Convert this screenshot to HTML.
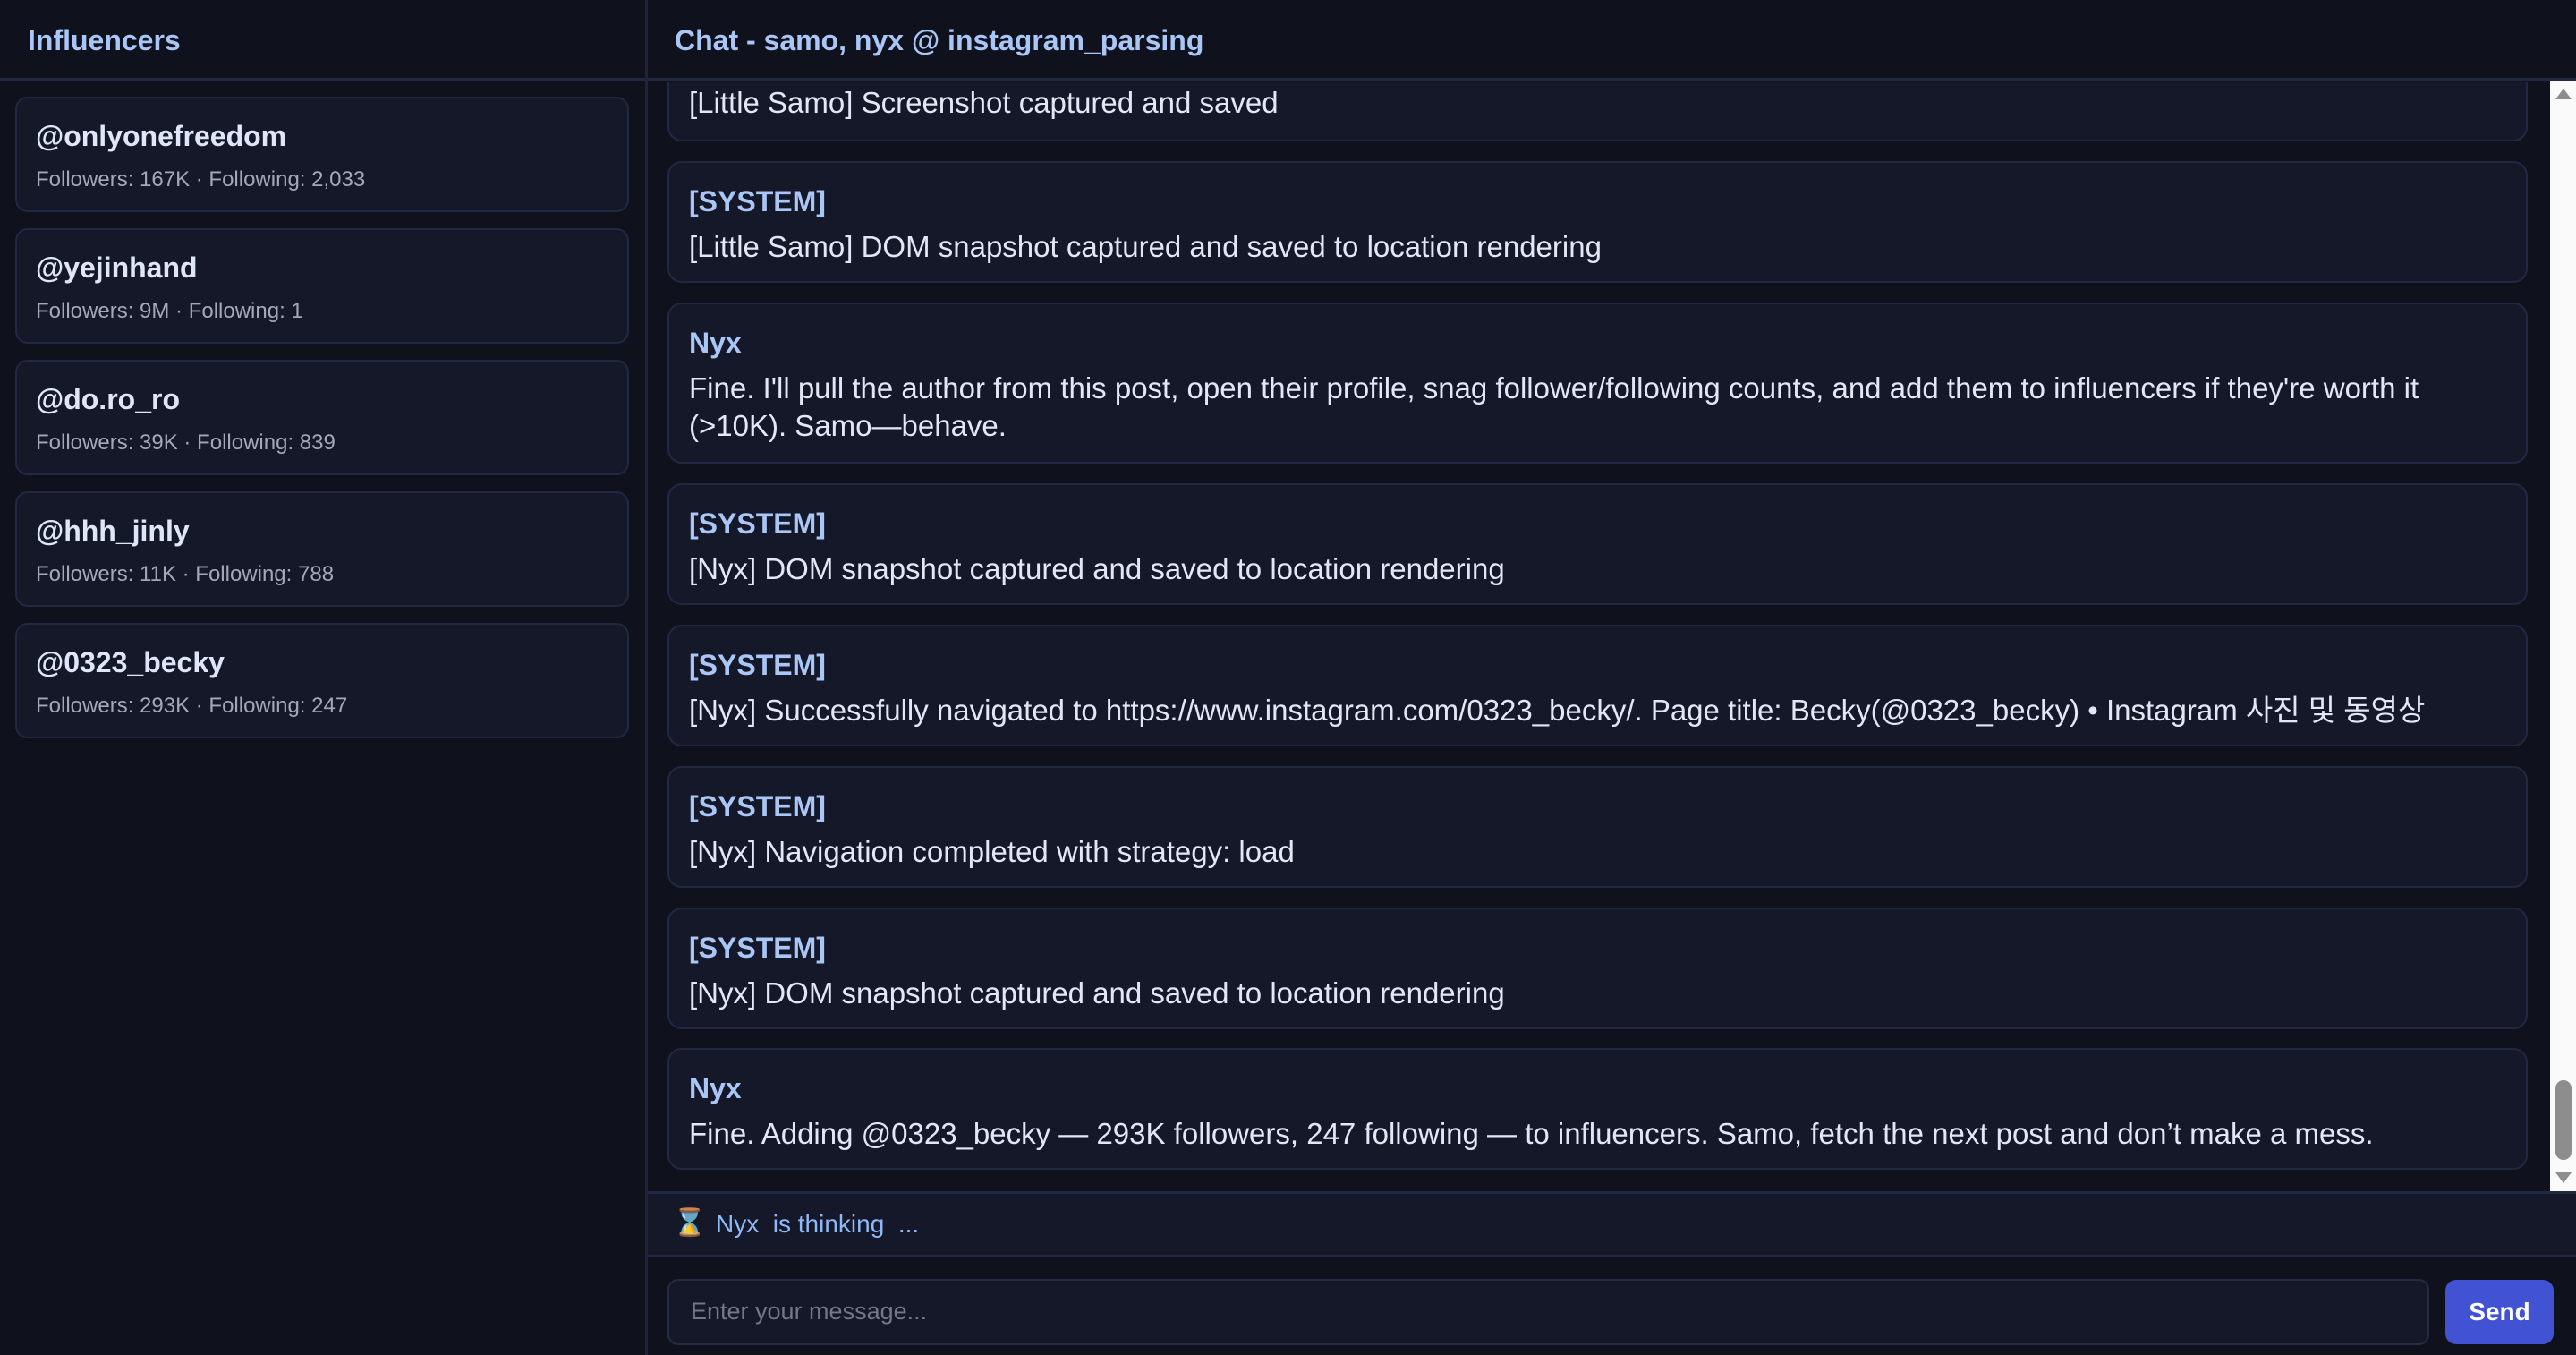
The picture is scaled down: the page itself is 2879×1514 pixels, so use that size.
<!DOCTYPE html>
<html><head><meta charset="utf-8"><style>
*{box-sizing:border-box;margin:0;padding:0}
body{width:2879px;height:1514px;overflow:hidden;background:#0f121d;font-family:"Liberation Sans","Noto Sans CJK KR",sans-serif;position:relative;color:#e3e7f5}
.abs{position:absolute}
.hdr{top:0;height:90px;border-bottom:3px solid #232842;background:#0f121d}
.ttl{color:#a9c6f7;font-weight:bold;font-size:32px;top:27px}
.card{left:17px;width:686px;height:129px;background:#151829;border:2px solid #232842;border-radius:14px}
.card .u{position:absolute;left:21px;top:24px;font-size:32px;font-weight:bold;color:#dfe6f7}
.card .s{position:absolute;left:21px;top:77px;font-size:24px;color:#a3a8b6}
.msg{left:746px;width:2079px;background:#151829;border:2px solid #232842;border-radius:16px;padding:22px 0 0 22px;font-size:33px;line-height:42px;white-space:nowrap}
.msg b{display:block;color:#a9c6f7;margin-bottom:9px;font-size:32px}
</style></head><body>
<div class="abs hdr" style="left:0;width:722px"></div>
<div class="abs hdr" style="left:722px;width:2157px"></div>
<div class="abs" style="left:721px;top:0;width:3px;height:1514px;background:#1f2338"></div>
<div class="abs ttl" style="left:31px">Influencers</div>
<div class="abs ttl" style="left:754px">Chat - samo, nyx @ instagram_parsing</div>

<div class="abs card" style="top:108px"><div class="u">@onlyonefreedom</div><div class="s">Followers: 167K · Following: 2,033</div></div>
<div class="abs card" style="top:255px"><div class="u">@yejinhand</div><div class="s">Followers: 9M · Following: 1</div></div>
<div class="abs card" style="top:402px"><div class="u">@do.ro_ro</div><div class="s">Followers: 39K · Following: 839</div></div>
<div class="abs card" style="top:549px"><div class="u">@hhh_jinly</div><div class="s">Followers: 11K · Following: 788</div></div>
<div class="abs card" style="top:696px"><div class="u">@0323_becky</div><div class="s">Followers: 293K · Following: 247</div></div>

<div class="abs" style="left:724px;top:92px;width:2126px;height:1239px;overflow:hidden">
<div class="abs msg" style="left:22px;top:-60px;height:126px;padding-top:60px">[Little Samo] Screenshot captured and saved</div>
<div class="abs msg" style="left:22px;top:88px;height:136px"><b>[SYSTEM]</b>[Little Samo] DOM snapshot captured and saved to location rendering</div>
<div class="abs msg" style="left:22px;top:246px;height:180px"><b>Nyx</b>Fine. I'll pull the author from this post, open their profile, snag follower/following counts, and add them to influencers if they're worth it<br>(&gt;10K). Samo—behave.</div>
<div class="abs msg" style="left:22px;top:448px;height:136px"><b>[SYSTEM]</b>[Nyx] DOM snapshot captured and saved to location rendering</div>
<div class="abs msg" style="left:22px;top:606px;height:136px"><b>[SYSTEM]</b>[Nyx] Successfully navigated to https://www.instagram.com/0323_becky/. Page title: Becky(@0323_becky) • Instagram 사진 및 동영상</div>
<div class="abs msg" style="left:22px;top:764px;height:136px"><b>[SYSTEM]</b>[Nyx] Navigation completed with strategy: load</div>
<div class="abs msg" style="left:22px;top:922px;height:136px"><b>[SYSTEM]</b>[Nyx] DOM snapshot captured and saved to location rendering</div>
<div class="abs msg" style="left:22px;top:1079px;height:136px"><b>Nyx</b>Fine. Adding @0323_becky — 293K followers, 247 following — to influencers. Samo, fetch the next post and don’t make a mess.</div>
</div>

<div class="abs" style="left:2850px;top:90px;width:29px;height:1241px;background:#fafafa"></div>
<div class="abs" style="left:2856px;top:99px;width:0;height:0;border-left:9px solid transparent;border-right:9px solid transparent;border-bottom:12px solid #8d8d8d"></div>
<div class="abs" style="left:2856px;top:1207px;width:18px;height:89px;background:#8d8d8d;border-radius:9px"></div>
<div class="abs" style="left:2856px;top:1310px;width:0;height:0;border-left:9px solid transparent;border-right:9px solid transparent;border-top:12px solid #8d8d8d"></div>

<div class="abs" style="left:724px;top:1331px;width:2155px;height:74px;background:#151829;border-top:3px solid #232842;border-bottom:3px solid #232842"></div>
<div class="abs" style="left:752px;top:1349px;font-size:30px">⌛</div>
<div class="abs" style="left:800px;top:1352px;font-size:28px;color:#8fb8f6;white-space:pre">Nyx  is thinking  ...</div>

<div class="abs" style="left:746px;top:1429px;width:1969px;height:74px;background:#151829;border:2px solid #262b45;border-radius:12px"></div>
<div class="abs" style="left:772px;top:1450px;font-size:27px;color:#747884">Enter your message...</div>
<div class="abs" style="left:2733px;top:1430px;width:121px;height:72px;background:#4152d3;border-radius:12px;color:#fff;font-weight:bold;font-size:28px;text-align:center;line-height:72px">Send</div>
</body></html>
